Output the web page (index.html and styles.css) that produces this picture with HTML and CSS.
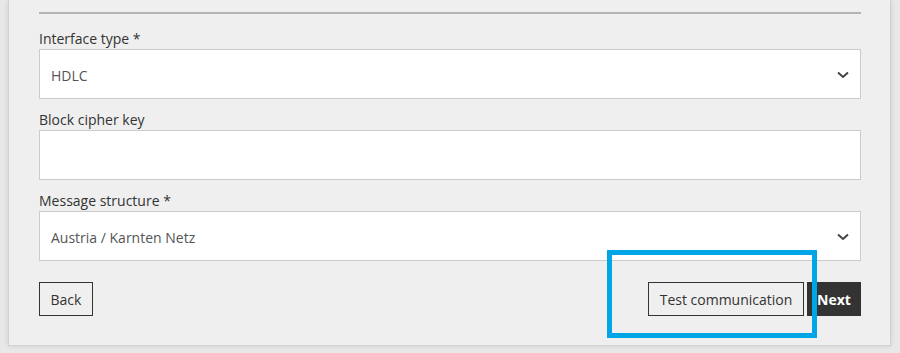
FILE: index.html
```html
<!DOCTYPE html>
<html>
<head>
<meta charset="utf-8">
<link rel="stylesheet" href="styles.css">
</head>
<body>
<div class="card">
  <div class="rule"></div>
  <div class="field">
    <label class="label">Interface type *</label>
    <div class="control select"><span class="value">HDLC</span>
      <svg class="chev" width="12" height="8" viewBox="0 0 12 8"><path d="M1 1.5 L6 6 L11 1.5" fill="none" stroke="#444" stroke-width="2"/></svg>
    </div>
  </div>
  <div class="field">
    <label class="label">Block cipher key</label>
    <div class="control"></div>
  </div>
  <div class="field">
    <label class="label">Message structure *</label>
    <div class="control select"><span class="value">Austria / Karnten Netz</span>
      <svg class="chev" width="12" height="8" viewBox="0 0 12 8"><path d="M1 1.5 L6 6 L11 1.5" fill="none" stroke="#444" stroke-width="2"/></svg>
    </div>
  </div>
  <div class="actions">
    <button class="btn back">Back</button>
    <div class="right">
      <button class="btn test">Test communication</button>
      <button class="btn primary">Next</button>
    </div>
  </div>
</div>
<div class="highlight"></div>
</body>
</html>
```
FILE: styles.css
```css
html, body {
  margin: 0;
  padding: 0;
}
body {
  background: #e8e8e8;
  font-family: "Open Sans", "Liberation Sans", sans-serif;
  font-size: 14px;
  color: #333;
  width: 900px;
  height: 353px;
  overflow: hidden;
  position: relative;
}
.card {
  margin-left: 8px;
  width: 822px;
  background: #efefef;
  border: 1px solid #d2d2d2;
  border-top: none;
  box-shadow: 0 0 5px rgba(0,0,0,0.12);
  padding: 12px 29px 29px 30px;
}
.rule {
  height: 2px;
  background: #b4b4b4;
  margin-bottom: 15px;
}
.field {
  display: flex;
  flex-direction: column;
  margin-bottom: 11px;
}
.label {
  line-height: 20px;
  height: 20px;
  color: #333;
}
.control {
  height: 48px;
  background: #fff;
  border: 1px solid #cbcbcb;
  display: flex;
  align-items: center;
  padding: 0 11px;
}
.value {
  flex: 1;
  color: #555;
  font-size: 14px;
  padding-top: 2px;
}
.chev {
  margin-top: 2px;
}
.actions {
  display: flex;
  justify-content: space-between;
  margin-top: 21px;
}
.right {
  display: flex;
  gap: 3px;
}
.btn {
  height: 34px;
  border: 1px solid #333;
  background: transparent;
  font-family: "Open Sans", "Liberation Sans", sans-serif;
  font-size: 14px;
  color: #333;
  padding: 0;
  cursor: pointer;
}
.btn.back {
  width: 54px;
}
.btn.test {
  width: 156px;
}
.btn.primary {
  width: 54px;
  background: #333;
  color: #fff;
  font-weight: 700;
}
.highlight {
  position: absolute;
  left: 607px;
  top: 250px;
  width: 200px;
  height: 78px;
  border: 5px solid #00a5e6;
}
```
